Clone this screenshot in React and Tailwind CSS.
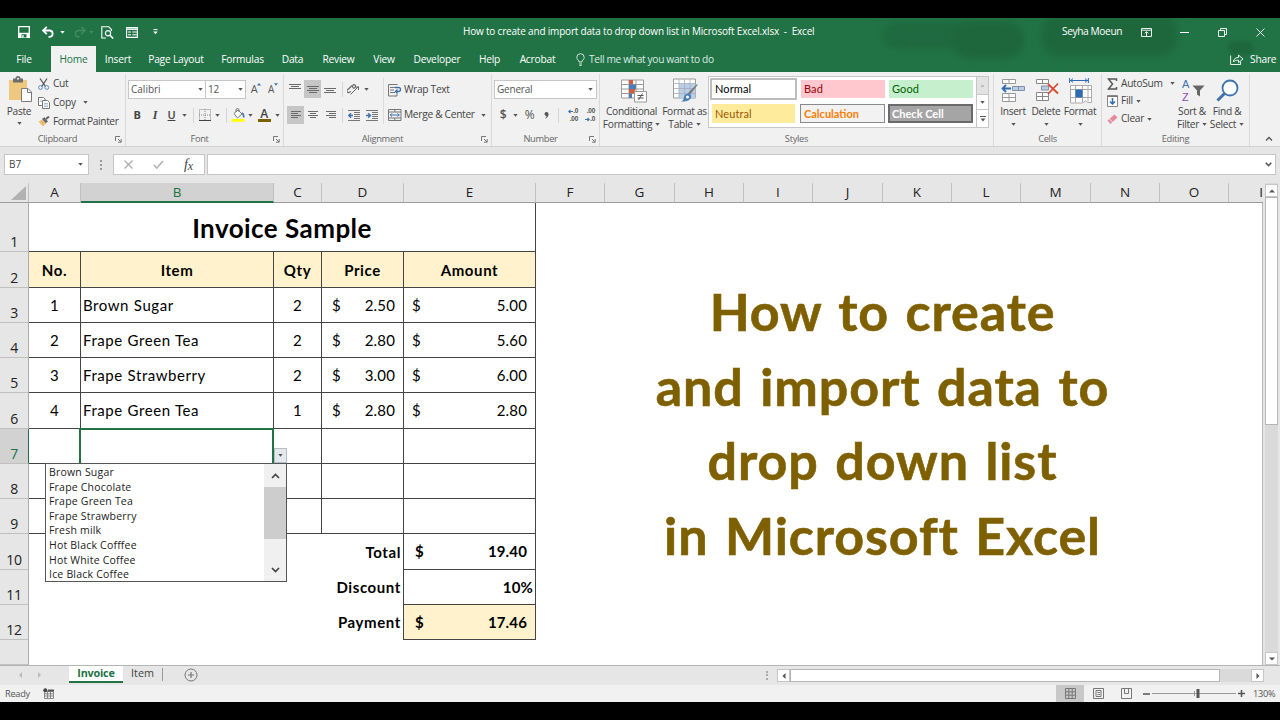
const tabs = [
  { name: "File", w: "w-[48px] mr-[3px]" },
  { name: "Home", w: "w-[45px]", active: true },
  { name: "Insert", w: "w-[44px]" },
  { name: "Page Layout", w: "w-[72px]" },
  { name: "Formulas", w: "w-[61px]" },
  { name: "Data", w: "w-[39px]" },
  { name: "Review", w: "w-[53px]" },
  { name: "View", w: "w-[38px]" },
  { name: "Developer", w: "w-[68px]" },
  { name: "Help", w: "w-[37px]" },
  { name: "Acrobat", w: "w-[59px]" },
];

const columns = [
  { name: "A", w: "w-[52px]" },
  { name: "B", w: "w-[193px]", active: true },
  { name: "C", w: "w-[48px]" },
  { name: "D", w: "w-[82px]" },
  { name: "E", w: "w-[132px]" },
  { name: "F", w: "w-[69px]" },
  { name: "G", w: "w-[70px]" },
  { name: "H", w: "w-[69px]" },
  { name: "I", w: "w-[69px]" },
  { name: "J", w: "w-[70px]" },
  { name: "K", w: "w-[69px]" },
  { name: "L", w: "w-[69px]" },
  { name: "M", w: "w-[70px]" },
  { name: "N", w: "w-[69px]" },
  { name: "O", w: "w-[69px]" },
];

const items = [
  { row: 3, h: "h-[35px]", no: 1, item: "Brown Sugar", qty: 2, price: "2.50", amount: "5.00" },
  { row: 4, h: "h-[35px]", no: 2, item: "Frape Green Tea", qty: 2, price: "2.80", amount: "5.60" },
  { row: 5, h: "h-[35px]", no: 3, item: "Frape Strawberry", qty: 2, price: "3.00", amount: "6.00" },
  { row: 6, h: "h-[36px]", no: 4, item: "Frape Green Tea", qty: 1, price: "2.80", amount: "2.80" },
];

const options = [
  "Brown Sugar",
  "Frape Chocolate",
  "Frape Green Tea",
  "Frape Strawberry",
  "Fresh milk",
  "Hot Black Cofffee",
  "Hot White Coffee",
  "Ice Black Coffee",
];

function Svg({ w, h, className = "", children }) {
  return (
    <svg width={w} height={h} viewBox={`0 0 ${w} ${h}`} fill="none" className={"shrink-0 " + className}>
      {children}
    </svg>
  );
}

function Caret({ className = "text-[#555]" }) {
  return (
    <Svg w={5} h={3} className={className}>
      <path d="M0.3 0h4.4L2.5 2.8z" fill="currentColor" />
    </Svg>
  );
}

function Slot({ w, className = "", children }) {
  return <div className={"flex shrink-0 items-center justify-center " + w + " " + className}>{children}</div>;
}

function Launcher() {
  return (
    <Svg w={7} h={7}>
      <path d="M0.5 5V0.5H5M3 3l3 3M6.2 3v3.2H3" stroke="#777" />
    </Svg>
  );
}

function Lines({ d }) {
  return (
    <Svg w={12} h={10}>
      <path d={d} stroke="#6a6a6a" />
    </Svg>
  );
}

function Group({ label, w, launcher, children }) {
  return (
    <div className={"flex h-[74px] shrink-0 flex-col " + w}>
      <div className="mt-[2px] flex h-[72px] flex-col border-r border-[#d9d9d9]">
        <div className="h-[58px]">{children}</div>
        <div className="flex h-[14px] items-center text-[9.3px] text-[#666]">
          <div className="flex-1 text-center">{label}</div>
          {launcher && (
            <div className="mr-[3px]">
              <Launcher />
            </div>
          )}
        </div>
      </div>
    </div>
  );
}

function TitleBar() {
  return (
    <div className="relative h-[54px] overflow-hidden bg-[#217346] text-white">
      <div className="absolute left-[882px] top-[4px] h-[27px] w-[88px] rounded-full bg-[#1f6a40] blur-[3px]" />
      <div className="absolute left-[952px] top-[3px] h-[38px] w-[72px] rounded-full bg-[#1e673d] blur-[3px]" />
      <div className="absolute left-[1042px] top-[-4px] h-[42px] w-[135px] rounded-[16px] bg-[#1e673d] blur-[4px]" />
      <div className="absolute left-[1228px] top-[23px] h-[14px] w-[26px] rounded-full bg-[#1e673d] blur-[2px]" />

      <div className="relative flex h-[28px] items-center text-[10.3px]">
        <Slot w="ml-[15px] w-[18px]">
          <Svg w={12} h={12}>
            <path d="M0.7 0.7h10.6v10.6H0.7z" stroke="#fff" strokeWidth="1.3" />
            <path d="M1 6.8h10v4.5H1z" fill="#fff" />
            <path d="M3.5 8.2h5v3.3h-5z" fill="#217346" />
            <path d="M4.2 9.2h1.5v2.3H4.2z" fill="#fff" />
          </Svg>
        </Slot>
        <Slot w="w-[30px]">
          <Svg w={13} h={12}>
            <path d="M1 4.5h7a3.2 3.2 0 0 1 0 6.3H6.5M4.8 0.8L1 4.5l3.8 3.7" stroke="#fff" strokeWidth="1.8" />
          </Svg>
        </Slot>
        <Caret className="-ml-[3px] text-white" />
        <Slot w="ml-[5px] w-[18px]">
          <Svg w={13} h={12}>
            <path d="M12 4.5H5a3.2 3.2 0 0 0 0 6.3h1.5M8.2 0.8L12 4.5 8.2 8.2" stroke="#468a65" strokeWidth="1.4" />
          </Svg>
        </Slot>
        <Caret className="ml-[1px] text-[#468a65]" />
        <Slot w="ml-[4px] w-[18px]">
          <Svg w={13} h={13}>
            <path d="M5 12H0.8V0.8h7L10.5 3.5V5" stroke="#fff" strokeWidth="1.1" />
            <circle cx="7" cy="7.2" r="2.6" stroke="#fff" strokeWidth="1.2" />
            <path d="M9 9.3l3.2 3.2" stroke="#fff" strokeWidth="1.5" />
          </Svg>
        </Slot>
        <Slot w="ml-[7px] w-[18px]">
          <Svg w={12} h={11}>
            <path d="M0.6 0.6h10.8v9.8H0.6z" stroke="#fff" strokeWidth="1.1" />
            <path d="M0.6 2.2h10.8" stroke="#fff" strokeWidth="1.4" />
            <path d="M2 5h3M2 7.8h3M6.3 5H11M6.3 7.8H11" stroke="#fff" strokeWidth="1.1" />
          </Svg>
        </Slot>
        <Svg w={5} h={6} className="ml-[12px]">
          <path d="M0.5 0.6h4" stroke="#fff" />
          <path d="M0.3 2.5h4.4L2.5 5.2z" fill="#fff" />
        </Svg>
        <div className="ml-[305px] mt-[-1px] w-[365px] whitespace-pre text-[10px] tracking-[-0.19px]">
          How to create and import data to drop down list in Microsoft Excel.xlsx  -  Excel
        </div>
        <div className="ml-auto w-[76px] whitespace-nowrap text-[10.2px] tracking-[-0.4px]">Seyha Moeun</div>
        <Slot w="w-[16px]">
          <Svg w={11} h={9}>
            <path d="M0.5 0.5h10v8H0.5zM0.5 2.2h10M5.5 8V4M3.7 5.4l1.8-1.8 1.8 1.8" stroke="#fff" strokeWidth="0.9" />
          </Svg>
        </Slot>
        <Slot w="ml-[22px] w-[16px]">
          <Svg w={9} h={1}>
            <path d="M0 0.5h9" stroke="#fff" />
          </Svg>
        </Slot>
        <Slot w="ml-[22px] w-[16px]">
          <Svg w={9} h={9}>
            <path d="M0.5 2.5h6v6h-6zM2.5 2.5v-2h6v6h-2" stroke="#fff" strokeWidth="0.9" />
          </Svg>
        </Slot>
        <Slot w="ml-[22px] mr-[12px] w-[16px]">
          <Svg w={9} h={9}>
            <path d="M0.5 0.5l8 8M8.5 0.5l-8 8" stroke="#fff" strokeWidth="0.9" />
          </Svg>
        </Slot>
      </div>

      <div className="relative flex h-[26px] items-center text-[10.2px] tracking-[-0.2px]">
        {tabs.map((t) => (
          <Slot
            key={t.name}
            w={t.w}
            className={"h-[26px] whitespace-nowrap pt-[1px] " + (t.active ? "bg-[#f1f1f1] text-[#217346]" : "")}
          >
            {t.name}
          </Slot>
        ))}
        <Svg w={9} h={13} className="ml-[9px]">
          <path d="M3 9V7.8C1.6 6.9 0.8 5.8 0.8 4.4a3.7 3.7 0 0 1 7.4 0C8.2 5.8 7.4 6.900 6 7.8V9zM3 11h3M3.5 12.5h2" stroke="#e3efe8" strokeWidth="0.9" />
        </Svg>
        <div className="ml-[4px] mt-[2px] whitespace-nowrap tracking-[-0.34px] text-[#dcebe2]">
          Tell me what you want to do
        </div>
        <Svg w={14} h={12} className="ml-auto">
          <path d="M0.6 2.5v9h10V8.5M3.5 9c0-3 2-4.500 5-4.500V2l4.500 4-4.500 3.700V7.200C6 7.200 4.500 7.500 3.500 9z" stroke="#fff" strokeWidth="0.9" />
        </Svg>
        <div className="ml-[6px] mt-[1px] w-[30px]">Share</div>
      </div>
    </div>
  );
}

function Clipboard() {
  return (
    <Group label="Clipboard" w="w-[126px]" launcher>
      <div className="flex">
        <div className="flex w-[38px] flex-col items-center pt-[2px]">
          <Svg w={26} h={27} className="ml-[4px]">
            <path d="M1 4h18v20H1z" fill="#edc87e" />
            <path d="M5 2.5h2.5a2.5 2.5 0 0 1 5 0H15v4H5z" fill="#6d6d6d" />
            <circle cx="10" cy="2.8" r="1" fill="#f1f1f1" />
            <path d="M13.5 12.500h6.500l3.500 3.500v9.500h-10z" fill="#fff" stroke="#7a7a7a" />
            <path d="M19.500 12.500v4h4" stroke="#7a7a7a" />
          </Svg>
          <div className="mt-[1px] text-[10.2px] leading-[14px]">Paste</div>
          <div className="mt-[4px]">
            <Caret />
          </div>
        </div>
        <div className="flex-1 text-[10.2px]">
          <div className="flex h-[19px] items-center pt-[1px]">
            <Svg w={12} h={12}>
              <path d="M2 0.500l5.500 8M9 0.500L3.800 8.500" stroke="#555" strokeWidth="1.300" />
              <circle cx="2.500" cy="9.500" r="1.900" stroke="#5b8cc0" />
              <circle cx="8.800" cy="9.500" r="1.900" stroke="#5b8cc0" />
            </Svg>
            <span className="ml-[3px]">Cut</span>
          </div>
          <div className="flex h-[19px] items-center">
            <Svg w={12} h={12}>
              <path d="M0.500 0.500h5L7 2v6.500H0.500z" fill="#fff" stroke="#777" />
              <path d="M4.500 3.500h5l2 2v6h-7z" fill="#fff" stroke="#777" />
              <path d="M6 6.500h4M6 8h4M6 9.500h4M1.800 3h2M1.800 4.500h2" stroke="#7fa3cc" strokeWidth="0.700" />
            </Svg>
            <span className="ml-[3px] mr-[7px]">Copy</span>
            <Caret />
          </div>
          <div className="flex h-[18px] items-center pt-[1px]">
            <Svg w={12} h={11}>
              <path d="M0.500 5.500l4-2 3.500 4L5 10.500z" fill="#e9bb72" />
              <path d="M4 2.800l2.500-1.500 3.500 4.200-2.300 1.700z" fill="#666" />
              <path d="M8 3l3-2.500" stroke="#666" strokeWidth="2" />
            </Svg>
            <span className="ml-[3px] whitespace-nowrap tracking-[-0.4px]">Format Painter</span>
          </div>
        </div>
      </div>
    </Group>
  );
}

function FontGroup() {
  return (
    <Group label="Font" w="w-[158px]" launcher>
      <div className="mt-[6px] flex h-[18px] items-center pl-[2px] text-[10px] text-[#555]">
        <div className="flex h-[19px] w-[78px] items-center justify-between border border-[#c6c6c6] bg-white pl-[2px] pr-[2px] tracking-normal">
          Calibri <Caret />
        </div>
        <div className="-ml-px flex h-[19px] w-[41px] items-center justify-between border border-[#c6c6c6] bg-white pl-[2px] pr-[2px]">
          12 <Caret />
        </div>
        <Slot w="w-[18px] ml-[1px]" className="text-[11px]">
          A
          <Svg w={4} h={3} className="-mt-[9px]">
            <path d="M0 2.500L2 0l2 2.500z" fill="#3f73b0" />
          </Svg>
        </Slot>
        <Slot w="w-[16px]" className="text-[10px]">
          A
          <Svg w={4} h={3} className="-mt-[9px]">
            <path d="M0 0.300h4L2 2.800z" fill="#3f73b0" />
          </Svg>
        </Slot>
      </div>
      <div className="mt-[8px] flex h-[18px] items-center pl-[2px] text-[11px] text-[#444]">
        <Slot w="w-[18px]" className="font-bold">B</Slot>
        <Slot w="w-[18px]" className="font-['Liberation_Serif',serif] text-[12px] font-bold italic">I</Slot>
        <Slot w="w-[15px]" className="font-semibold underline">U</Slot>
        <Slot w="w-[11px]"><Caret /></Slot>
        <Slot w="w-[6px]"><div className="h-[15px] w-px bg-[#d5d5d5]" /></Slot>
        <Slot w="w-[17px]">
          <Svg w={12} h={12}>
            <path d="M0.500 0.500h11v11H0.500zM6 0v12M0 6h12" stroke="#888" strokeDasharray="1 1" />
            <path d="M0 11.500h12" stroke="#444" />
          </Svg>
        </Slot>
        <Slot w="w-[9px]"><Caret /></Slot>
        <Slot w="w-[8px]"><div className="h-[15px] w-px bg-[#d5d5d5]" /></Slot>
        <Slot w="w-[16px]">
          <Svg w={14} h={14}>
            <path d="M3 5.500L7 2l4 4-4.500 4z" fill="#fff" stroke="#777" />
            <path d="M5 4V2a1.500 1.500 0 0 1 3 0v2" stroke="#777" />
            <path d="M11 5c1.500 1 2 2.500 1.500 4.500" stroke="#3f73b0" strokeWidth="1.600" />
            <path d="M0.500 11h13v2.800h-13z" fill="#ffff00" />
          </Svg>
        </Slot>
        <Slot w="w-[9px]"><Caret /></Slot>
        <Slot w="w-[18px]">
          <div className="flex h-[14px] w-[13px] items-center justify-center border-b-3 border-[#7f6000] text-[12px] font-semibold">A</div>
        </Slot>
        <Slot w="w-[8px]"><Caret /></Slot>
      </div>
    </Group>
  );
}

function Alignment() {
  return (
    <Group label="Alignment" w="w-[208px]" launcher>
      <div className="flex">
        <div className="mt-[4px] h-[46px] w-[100px] border-r border-[#dcdcdc]">
          <div className="mt-[2px] flex h-[18px] items-center">
            <Slot w="w-[20px]" className="pl-[2px]">
              <Lines d="M0 0.500h12M2 2.500h8M0 4.500h12" />
            </Slot>
            <Slot w="w-[17px]" className="h-[18px] bg-[#c6c6c6]">
              <Lines d="M0 2.500h12M2 4.500h8M0 6.500h12M2 8.500h8" />
            </Slot>
            <Slot w="w-[18px]">
              <Lines d="M0 4.500h12M2 6.500h8M0 8.500h12" />
            </Slot>
            <Slot w="w-[6px]"><div className="h-[15px] w-px bg-[#d5d5d5]" /></Slot>
            <Slot w="w-[17px]">
              <Svg w={13} h={12}>
                <path d="M1 6.500l4-4M3.500 8a1.800 1.800 0 1 1-2-2M6 2c1.800-1 3.500 1 2 2.500S5 5 6 2z" stroke="#666" strokeWidth="1.100" />
                <path d="M3.500 11.500l8-8M8.500 4h3v3" stroke="#666" />
              </Svg>
            </Slot>
            <Slot w="w-[8px]"><Caret /></Slot>
          </div>
          <div className="mt-[8px] flex h-[18px] items-center">
            <Slot w="w-[17px] ml-[3px]" className="h-[18px] bg-[#c6c6c6]">
              <Lines d="M1 1.500h10M1 3.500h7M1 5.500h10M1 7.500h7" />
            </Slot>
            <Slot w="w-[18px]">
              <Lines d="M1 1.500h10M3 3.500h6M1 5.500h10M3 7.500h6" />
            </Slot>
            <Slot w="w-[17px]">
              <Lines d="M1 1.500h10M4 3.500h7M1 5.500h10M4 7.500h7" />
            </Slot>
            <Slot w="w-[6px]"><div className="h-[15px] w-px bg-[#d5d5d5]" /></Slot>
            <Slot w="w-[18px]">
              <Svg w={12} h={11}>
                <path d="M0 0.500h12M6 2.500h6M6 4.500h6M6 6.500h6M6 8.500h6M0 10.500h12" stroke="#777" />
                <path d="M5 5.500H1M3 3.200L0.800 5.500 3 7.800" stroke="#3f73b0" strokeWidth="1.500" />
              </Svg>
            </Slot>
            <Slot w="w-[17px]">
              <Svg w={12} h={11}>
                <path d="M0 0.500h12M6 2.500h6M6 4.500h6M6 6.500h6M6 8.500h6M0 10.500h12" stroke="#777" />
                <path d="M0 5.500h4M2.200 3.200l2.200 2.300-2.200 2.300" stroke="#3f73b0" strokeWidth="1.500" />
              </Svg>
            </Slot>
          </div>
        </div>
        <div className="mt-[6px] flex-1 pl-[4px] text-[10.2px]">
          <div className="flex h-[18px] items-center pt-[2px]">
            <Svg w={14} h={13}>
              <path d="M0.500 0.500h9M0.500 12V0.500M0.500 12h7M9 10v2H7" stroke="#777" />
              <path d="M2 3.500h5M2 6h4M2 8.500h5" stroke="#777" />
              <path d="M7 3.500h3.500a2 2 0 0 1 0 4H8M9.500 5.500l-2 2 2 2" stroke="#3f73b0" strokeWidth="1.300" />
            </Svg>
            <span className="ml-[2px] whitespace-nowrap">Wrap Text</span>
          </div>
          <div className="mt-[8px] flex h-[18px] items-center">
            <Svg w={14} h={12}>
              <path d="M0.500 0.500h12.500v11H0.500zM0.500 3h12.500M0.500 9h12.500M6.800 0v3M6.800 9v3" stroke="#777" />
              <path d="M2 6h9.500M4 4.300L2.300 6 4 7.700M9.500 4.300L11.200 6 9.500 7.700" stroke="#3f73b0" />
            </Svg>
            <span className="ml-[2px] mr-[6px] whitespace-nowrap">Merge &amp; Center</span>
            <Caret />
          </div>
        </div>
      </div>
    </Group>
  );
}

function NumberGroup() {
  return (
    <Group label="Number" w="w-[108px]" launcher>
      <div className="ml-[2px] mt-[6px] flex h-[19px] w-[103px] items-center justify-between border border-[#c6c6c6] bg-white pl-[2px] pr-[3px] text-[10px] tracking-[-0.2px] text-[#555]">
        General <Caret />
      </div>
      <div className="mt-[7px] flex h-[18px] items-center text-[12px] text-[#555]">
        <Slot w="w-[14px] ml-[4px]" className="font-semibold">$</Slot>
        <Slot w="w-[11px]"><Caret /></Slot>
        <Slot w="w-[17px]">%</Slot>
        <Slot w="w-[16px]">
          <Svg w={5} h={7}>
            <path d="M0.500 2a2 2 0 1 1 4 0c0 2-1 3.500-3 4.500L1 6c1-0.600 1.500-1.200 1.500-2.100C1.300 3.900 0.500 3 0.500 2z" fill="#555" />
          </Svg>
        </Slot>
        <Slot w="w-[8px]"><div className="h-[15px] w-px bg-[#d5d5d5]" /></Slot>
        <div className="flex w-[16px] shrink-0 flex-col items-end font-['Liberation_Sans',sans-serif] text-[6.500px] font-bold leading-[8px]">
          <div className="flex items-center">
            <Svg w={5} h={5}>
              <path d="M5 2.500H1M2.500 0.800L0.800 2.500l1.700 1.700" stroke="#3f73b0" strokeWidth="1.200" />
            </Svg>
            .0
          </div>
          <div>.00</div>
        </div>
        <div className="ml-[1px] flex w-[16px] shrink-0 flex-col items-end font-['Liberation_Sans',sans-serif] text-[6.500px] font-bold leading-[8px]">
          <div>.00</div>
          <div className="flex items-center">
            <Svg w={5} h={5}>
              <path d="M0 2.500h4M2.500 0.800l1.700 1.700-1.700 1.700" stroke="#3f73b0" strokeWidth="1.200" />
            </Svg>
            .0
          </div>
        </div>
      </div>
    </Group>
  );
}

function BigButton({ w, icon, line1, line2, caret }) {
  return (
    <div className={"flex shrink-0 flex-col items-center " + w}>
      <div className="flex h-[31px] items-center justify-center pt-[2px]">{icon}</div>
      <div className="whitespace-nowrap text-[10.2px] leading-[13px]">{line1}</div>
      <div className="flex h-[13px] items-center gap-[3px] whitespace-nowrap text-[10.2px] leading-[13px]">
        {line2}
        {caret && <Caret />}
      </div>
    </div>
  );
}

function Styles() {
  return (
    <Group label="Styles" w="w-[394px]">
      <div className="flex">
        <BigButton
          w="w-[63px]"
          line1="Conditional"
          line2="Formatting"
          caret
          icon={
            <Svg w={26} h={24} className="ml-[4px]">
              <path d="M0.500 1h22v18h-22zM0.500 5.500h22M0.500 10h22M0.500 14.500h22M8 1v18M15 1v18" stroke="#9a9a9a" fill="#fff" />
              <path d="M8 1h4v4.500H8zM8 10h6v4.500H8z" fill="#cf5b42" />
              <path d="M8 5.500h7V10H8zM8 14.500h3V19H8z" fill="#4a7ebb" />
              <path d="M13.500 12.500h12v10.500h-12z" fill="#fff" stroke="#999" />
              <path d="M16.500 16.500h6M16.500 19h6M21.500 14.500l-4 6.500" stroke="#555" />
            </Svg>
          }
        />
        <BigButton
          w="w-[43px]"
          line1="Format as"
          line2="Table"
          caret
          icon={
            <Svg w={26} h={25} className="ml-[2px]">
              <path d="M0.500 1h22v19h-22z" fill="#fff" stroke="#9a9a9a" />
              <path d="M6 6h16.500v14H6z" fill="#b9cfe8" />
              <path d="M0.500 5.500h22M0.500 10.500h22M0.500 15.500h22M6 1v19M11.500 1v19M17 1v19" stroke="#a5adb8" strokeWidth="0.800" />
              <path d="M25 6.500L17 16.500l-2-1.500 8.500-8.500z" fill="#777" />
              <path d="M15.500 15.500c2 0.500 3 2 2.500 4-1 3-5 4.500-10 4 2.500-1 2.500-2 3-4.500 0.500-2 2-3.500 4.500-3.500z" fill="#4a7ebb" />
              <circle cx="14.500" cy="19" r="1.500" fill="#fff" />
            </Svg>
          }
        />
        <div className="ml-[2px] mt-[2px] flex h-[52px] w-[281px] border border-[#c6c6c6] bg-white font-['Lato',sans-serif] text-[11px] tracking-[0.1px]">
          <div className="grid w-[267px] grid-cols-[87px_85px_85px] grid-rows-[22px_19px] gap-x-[3px] gap-y-[4px] pl-[1px] pt-[1px]">
            <div className="flex items-center border-2 border-[#bdbdbd] pl-[3px] text-black">Normal</div>
            <div className="my-[2px] ml-px flex items-center bg-[#ffc7ce] pl-[3px] text-[#9c0006]">Bad</div>
            <div className="my-[2px] ml-px flex items-center bg-[#c6efce] pl-[3px] text-[#006100]">Good</div>
            <div className="ml-[2px] mr-[2px] flex items-center bg-[#ffeb9c] pl-[3px] pt-[1px] text-[#9c5700]">Neutral</div>
            <div className="flex items-center border border-[#8a8a8a] bg-[#f2f2f2] pl-[3px] pt-[1px] font-bold tracking-[0px] text-[#fa7d00]">
              Calculation
            </div>
            <div className="flex items-center border-2 border-[#6a6a6a] bg-[#a5a5a5] pl-[2px] pt-[1px] font-bold tracking-[0px] text-white">
              Check Cell
            </div>
          </div>
          <div className="flex flex-1 flex-col border-l border-[#c6c6c6]">
            <Slot w="w-full" className="h-[17px] bg-[#e3e3e3]">
              <Caret className="rotate-180 text-[#bbb]" />
            </Slot>
            <Slot w="w-full" className="h-[16px] border-y border-[#c6c6c6]">
              <Caret />
            </Slot>
            <Slot w="w-full" className="h-[17px]">
              <Svg w={6} h={6}>
                <path d="M0 0.500h6" stroke="#555" />
                <path d="M0.600 2.500h4.800L3 5.400z" fill="#555" />
              </Svg>
            </Slot>
          </div>
        </div>
      </div>
    </Group>
  );
}

function Cells() {
  return (
    <Group label="Cells" w="w-[108px]">
      <div className="flex pl-[3px]">
        <BigButton
          w="w-[32px]"
          line1="Insert"
          caret
          icon={
            <Svg w={24} h={25}>
              <path d="M1.500 1.500h13v4h-13zM8 1.500v4M1.500 15.500h13v8h-13zM1.500 19.500h13M8 15.500v8" stroke="#999" fill="#fff" />
              <path d="M11.500 8.500h12v4h-12zM17.500 8.500v4" fill="#b9cfe8" stroke="#7f8fa5" />
              <path d="M10 10.500H1.500M5 7l-3.500 3.500L5 14" stroke="#2f6cb3" strokeWidth="1.800" />
            </Svg>
          }
        />
        <BigButton
          w="w-[34px]"
          line1="Delete"
          caret
          icon={
            <Svg w={24} h={25} className="ml-[2px]">
              <path d="M1.500 1.500h12v4h-12zM7.500 1.500v4M1.500 14.500h12v8h-12zM1.500 18.500h12M7.500 14.500v8" stroke="#888" fill="#fff" />
              <path d="M6.500 8h7v4h-7z" fill="#b9cfe8" stroke="#7f8fa5" />
              <path d="M13 6l10 9.500M23 5.500L13 16" stroke="#d8492c" strokeWidth="1.800" />
            </Svg>
          }
        />
        <BigButton
          w="w-[34px]"
          line1="Format"
          caret
          icon={
            <Svg w={24} h={26} className="ml-[2px]">
              <path d="M1 2.500h18M4 0.500L1.800 2.500 4 4.500M16 0.500l2.200 2L16 4.500M0.600 0v5M19.400 0v5" stroke="#2f6cb3" />
              <path d="M1.500 7.500h21v17h-4l-2-1.500-3 2h-12zM1.500 11.500h21M1.500 19.500h21M6.500 7.500v17M13.500 7.500v17M19 7.500v16" stroke="#aaa" fill="#fff" />
              <path d="M6.500 11.500h7v8h-7z" fill="#2f6cb3" />
            </Svg>
          }
        />
      </div>
    </Group>
  );
}

function Editing() {
  return (
    <Group label="Editing" w="w-[148px]">
      <div className="flex">
        <div className="w-[73px] pl-[5px] text-[10.2px]">
          <div className="flex h-[18px] items-center pt-[1px]">
            <Svg w={11} h={12}>
              <path d="M9.500 3V1H1.500l4 5-4 5h8V9" stroke="#555" strokeWidth="1.500" />
            </Svg>
            <span className="ml-[3px] mr-[7px]">AutoSum</span>
            <Caret />
          </div>
          <div className="flex h-[18px] items-center">
            <Svg w={11} h={12}>
              <path d="M0.500 0.500h10v11h-10z" fill="#fff" stroke="#888" />
              <path d="M0.500 1.500h10" stroke="#777" />
              <path d="M5.500 3v6M3 6.500L5.500 9 8 6.500" stroke="#2f6cb3" strokeWidth="1.500" />
            </Svg>
            <span className="ml-[3px] mr-[3px]">Fill</span>
            <Caret />
          </div>
          <div className="flex h-[18px] items-center">
            <Svg w={11} h={11}>
              <path d="M0.500 6.500L7.500 0.500l3 3-7 6.500z" fill="#e58a9c" />
              <path d="M2.500 4.800L5.500 8.200" stroke="#fff" strokeWidth="0.800" />
            </Svg>
            <span className="ml-[3px] mr-[3px]">Clear</span>
            <Caret />
          </div>
        </div>
        <BigButton
          w="w-[34px]"
          line1="Sort &amp;"
          line2="Filter"
          caret
          icon={
            <div className="ml-[3px] flex items-center">
              <div className="font-['Liberation_Sans',sans-serif] text-[11px] leading-[13px]">
                <div className="text-[#3f73b0]">A</div>
                <div className="text-[#8e4bb5]">Z</div>
              </div>
              <Svg w={13} h={12} className="ml-[3px]">
                <path d="M0.500 0.500h12L8 5.500v6l-3-2v-4z" fill="#666" />
              </Svg>
            </div>
          }
        />
        <BigButton
          w="w-[36px]"
          line1="Find &amp;"
          line2="Select"
          caret
          icon={
            <Svg w={23} h={23}>
              <circle cx="14" cy="9" r="7.500" fill="#fff" stroke="#3f73b0" strokeWidth="1.800" />
              <path d="M8.500 14.500L1.500 21.500" stroke="#3f73b0" strokeWidth="3" />
            </Svg>
          }
        />
      </div>
    </Group>
  );
}

function FormulaBar() {
  return (
    <div className="flex h-[36px] items-start bg-[#e6e6e6] pt-[7px] text-[10px] text-[#444]">
      <div className="ml-[4px] flex h-[21px] w-[85px] items-center justify-between border border-[#c6c6c6] bg-white pl-[4px] pr-[5px]">
        B7 <Caret />
      </div>
      <Slot w="w-[24px]" className="h-[21px]">
        <div className="h-[10px] border-l-2 border-dotted border-[#999]" />
      </Slot>
      <div className="flex h-[21px] w-[92px] items-center border border-[#c6c6c6] bg-white">
        <Slot w="w-[29px]">
          <Svg w={9} h={9}>
            <path d="M0.500 0.500l8 8M8.500 0.500l-8 8" stroke="#aaa" strokeWidth="1.300" />
          </Svg>
        </Slot>
        <Slot w="w-[31px]">
          <Svg w={11} h={9}>
            <path d="M0.800 5l3 3L10 1" stroke="#b5b5b5" strokeWidth="1.700" />
          </Svg>
        </Slot>
        <Slot w="w-[29px]" className="font-['Liberation_Serif',serif] text-[14px] italic">
          f<span className="mt-[2px] text-[12px]">x</span>
        </Slot>
      </div>
      <div className="ml-[2px] flex h-[21px] w-[1069px] items-center justify-end border border-[#c6c6c6] bg-white pr-[3px]">
        <Svg w={7} h={5}>
          <path d="M0.700 0.800l2.800 2.800L6.300 0.800" stroke="#555" strokeWidth="1.500" />
        </Svg>
      </div>
    </div>
  );
}

function ColumnHeader() {
  return (
    <div className="flex h-[20px] w-[1263px] bg-[#e6e6e6] text-[13.500px] text-[#222]">
      <div className="flex h-[20px] w-[29px] shrink-0 items-start justify-end border-b border-r border-b-[#9b9b9b] border-r-[#c0c0c0] pr-[2px] pt-[3px]">
        <Svg w={15} h={14}>
          <path d="M15 0v14H0z" fill="#b2b2b2" />
        </Svg>
      </div>
      {columns.map((c) => (
        <div
          key={c.name}
          className={
            "flex h-[20px] shrink-0 items-center justify-center border-r border-r-[#c0c0c0] " +
            c.w +
            (c.active ? " border-b-2 border-b-[#217346] bg-[#d2d2d2] text-[#217346]" : " border-b border-b-[#9b9b9b]")
          }
        >
          {c.name}
        </div>
      ))}
      <div className="flex h-[20px] flex-1 items-center justify-end border-b border-b-[#9b9b9b]">I</div>
    </div>
  );
}

function Row({ n, h, active, children }) {
  return (
    <div className={"flex " + h}>
      <div
        className={
          "flex w-[29px] shrink-0 items-end justify-center border-b border-r border-b-[#c0c0c0] font-['Open_Sans',sans-serif] text-[14px] leading-[18px] tracking-[-0.300px] " +
          (active ? "border-r-[#217346] bg-[#d2d2d2] text-[#217346]" : "border-r-[#ababab] bg-[#e6e6e6] text-[#222]")
        }
      >
        {n}
      </div>
      {children}
    </div>
  );
}

function Cell({ w, className = "", children }) {
  return <div className={"flex shrink-0 items-center border-b border-r border-[#444] " + w + " " + className}>{children}</div>;
}

function HeadCell({ w, children }) {
  return (
    <Cell w={w} className="justify-center bg-[#fff2cc] pt-[1px] font-bold tracking-[0.600px]">
      {children}
    </Cell>
  );
}

function Label({ children }) {
  return (
    <div className="flex w-[375px] items-center justify-end border-r border-[#444] pr-[2px] font-bold tracking-[0.600px]">
      {children}
    </div>
  );
}

function Money({ w, className = "", children }) {
  return (
    <Cell w={w} className={"justify-between pr-[8px] " + className}>
      <span>$</span>
      <span>{children}</span>
    </Cell>
  );
}

function Sheet() {
  return (
    <div className="relative w-[536px] font-['Lato',sans-serif] text-[15px] tracking-[0.150px] text-black">
      <Row n={1} h="h-[49px]">
        <Cell w="w-[507px]" className="justify-center pt-[2px] text-[26px] font-bold tracking-[0.450px]">Invoice Sample</Cell>
      </Row>
      <Row n={2} h="h-[36px]">
        <HeadCell w="w-[52px]">No.</HeadCell>
        <HeadCell w="w-[193px]">Item</HeadCell>
        <HeadCell w="w-[48px]">Qty</HeadCell>
        <HeadCell w="w-[82px]">Price</HeadCell>
        <HeadCell w="w-[132px]">Amount</HeadCell>
      </Row>
      {items.map((it) => (
        <Row key={it.row} n={it.row} h={it.h}>
          <Cell w="w-[52px]" className="justify-center">{it.no}</Cell>
          <Cell w="w-[193px]" className="pl-[2px] tracking-[0.550px] [word-spacing:0.500px]">{it.item}</Cell>
          <Cell w="w-[48px]" className="justify-center">{it.qty}</Cell>
          <Money w="w-[82px]" className="pl-[10px]">{it.price}</Money>
          <Money w="w-[132px]" className="pl-[8px]">{it.amount}</Money>
        </Row>
      ))}
      {[7, 8, 9].map((n) => (
        <Row key={n} n={n} h="h-[35px]" active={n === 7}>
          <Cell w="w-[52px]" />
          <Cell w="w-[193px]" />
          <Cell w="w-[48px]" />
          <Cell w="w-[82px]" />
          <Cell w="w-[132px]" />
        </Row>
      ))}
      <Row n={10} h="h-[36px]">
        <Label>Total</Label>
        <Money w="w-[132px]" className="pl-[11px] font-bold">19.40</Money>
      </Row>
      <Row n={11} h="h-[35px]">
        <Label>Discount</Label>
        <Cell w="w-[132px]" className="justify-end pr-[2px] font-bold">10%</Cell>
      </Row>
      <Row n={12} h="h-[35px]">
        <Label>Payment</Label>
        <Money w="w-[132px]" className="bg-[#fff2cc] pl-[11px] font-bold">17.46</Money>
      </Row>
      <Row n="" h="h-[25px]" />

      {/* selected cell */}
      <div className="absolute left-[79px] top-[225px] h-[35px] w-[195px] border-2 border-b-0 border-[#217346]" />
      <div className="absolute left-[274px] top-[245px] flex h-[15px] w-[13px] items-center justify-center border border-[#b5bcc6] bg-[#e4e9f0]">
        <Caret />
      </div>

      {/* drop down list */}
      <div className="absolute left-[45px] top-[260px] flex h-[119px] w-[242px] border border-[#555] bg-white font-['Open_Sans',sans-serif] text-[10.500px] tracking-[0.200px]">
        <div className="flex-1 pl-[3px] pt-[1px]">
          {options.map((o) => (
            <div key={o} className="h-[14.600px] leading-[14.600px] text-[#222]">
              {o}
            </div>
          ))}
        </div>
        <div className="flex w-[22px] flex-col items-center bg-[#f0f0f0]">
          <Slot w="w-full" className="h-[23px]">
            <Svg w={9} h={6}>
              <path d="M1 5l3.500-3.500L8 5" stroke="#444" strokeWidth="1.700" />
            </Svg>
          </Slot>
          <div className="h-[52px] w-full bg-[#cdcdcd]" />
          <div className="flex-1" />
          <Slot w="w-full" className="h-[23px]">
            <Svg w={9} h={6}>
              <path d="M1 1l3.500 3.500L8 1" stroke="#444" strokeWidth="1.700" />
            </Svg>
          </Slot>
        </div>
      </div>
    </div>
  );
}

function SheetTabs() {
  return (
    <div className="flex h-[20px] border-t border-[#b5b5b5] bg-[#e6e6e6] text-[10.800px]">
      <Svg w={3} h={6} className="ml-[19px] mt-[6px]">
        <path d="M3 0v6L0 3z" fill="#bbb" />
      </Svg>
      <Svg w={3} h={6} className="ml-[16px] mt-[6px]">
        <path d="M0 0v6l3-3z" fill="#bbb" />
      </Svg>
      <div className="ml-[28px] flex h-[17px] w-[54px] items-center justify-center border-b-2 border-[#217346] bg-white pb-[1px] font-bold tracking-[-0.200px] text-[#217346]">
        Invoice
      </div>
      <div className="mt-[2px] flex h-[13px] w-[40px] items-center justify-center border-r border-[#999] pb-[2px] text-[#444]">Item</div>
      <Svg w={14} h={14} className="ml-[21px] mt-[2px]">
        <circle cx="7" cy="7" r="6" stroke="#777" />
        <path d="M7 4v6M4 7h6" stroke="#777" strokeWidth="1.200" />
      </Svg>
      <div className="ml-[568px] mt-[5px] h-[9px] border-l-2 border-dotted border-[#aaa]" />
      <div className="ml-[9px] mt-[3px] flex h-[13px] w-[487px] bg-[#dadada]">
        <Slot w="w-[13px]" className="border border-[#c6c6c6] bg-white">
          <Svg w={4} h={6}>
            <path d="M3.500 0v6L0.500 3z" fill="#555" />
          </Svg>
        </Slot>
        <div className="w-[430px] border border-[#b5b5b5] bg-white" />
        <div className="flex-1" />
        <Slot w="w-[13px]" className="border border-[#c6c6c6] bg-white">
          <Svg w={4} h={6}>
            <path d="M0.500 0v6l3-3z" fill="#555" />
          </Svg>
        </Slot>
      </div>
    </div>
  );
}

function StatusBar() {
  return (
    <div className="flex h-[17px] items-center bg-[#f1f1f1] text-[9.200px] tracking-[-0.250px] text-[#555]">
      <div className="w-[43px] pl-[5px]">Ready</div>
      <Svg w={11} h={11}>
        <path d="M1.500 3.500h9v7h-9zM4.500 3.500v7M7.500 3.500v7M1.500 5.800h9M1.500 8h9" stroke="#888" />
        <path d="M5 1.500h6v2H5z" fill="#555" />
        <circle cx="2.300" cy="2.200" r="2" fill="#444" />
      </Svg>
      <Slot w="ml-auto w-[28px]" className="h-[17px] bg-[#c8c8c8]">
        <Svg w={11} h={11}>
          <path d="M0.500 0.500h10v10h-10zM3.800 0v11M7.200 0v11M0 3.800h11M0 7.200h11" stroke="#777" />
        </Svg>
      </Slot>
      <Slot w="w-[28px]">
        <Svg w={11} h={11}>
          <path d="M0.500 0.500h10v10h-10zM3 2.500h5v6H3zM4.500 4.500h2.500M4.500 6.500h2.500" stroke="#777" />
        </Svg>
      </Slot>
      <Slot w="w-[28px]">
        <Svg w={11} h={11}>
          <path d="M0.500 0.500h10v10h-10zM3.500 0v5.500h4V0" stroke="#777" />
        </Svg>
      </Slot>
      <Svg w={7} h={2} className="ml-[3px]">
        <path d="M0 1h7" stroke="#555" strokeWidth="1.500" />
      </Svg>
      <Svg w={84} h={9} className="ml-[2px]">
        <path d="M0 4.500h84M42.500 2v5" stroke="#999" />
        <path d="M44.500 0h3v9h-3z" fill="#555" />
      </Svg>
      <Svg w={7} h={7} className="ml-[2px]">
        <path d="M0 3.500h7M3.500 0v7" stroke="#555" strokeWidth="1.500" />
      </Svg>
      <div className="ml-[8px] w-[27px]">130%</div>
    </div>
  );
}

function App() {
  return (
    <div className="h-[720px] w-[1280px] overflow-hidden bg-black py-[18px] font-['Open_Sans',sans-serif] text-[#444]">
      <TitleBar />
      <div className="flex h-[75px] border-b border-[#d2d2d2] bg-[#f1f1f1] tracking-[-0.300px]">
        <Clipboard />
        <FontGroup />
        <Alignment />
        <NumberGroup />
        <Styles />
        <Cells />
        <Editing />
        <div className="flex flex-1 items-end justify-end pb-[4px] pr-[7px]">
          <Svg w={8} h={6}>
            <path d="M1 4.500l3-3 3 3" stroke="#555" strokeWidth="1.300" />
          </Svg>
        </div>
      </div>
      <FormulaBar />

      <div className="flex h-[482px] bg-[#e6e6e6]">
        <div className="w-[1263px]">
          <ColumnHeader />
          <div className="flex h-[462px] overflow-hidden border-r border-[#b5b5b5] bg-white">
            <Sheet />
            <div className="flex-1 pr-[33px] pt-[71px] text-center font-['Lato',sans-serif] text-[52px] font-bold leading-[74.700px] tracking-[0.900px] text-[#7f6000] [-webkit-text-stroke:0.600px_#7f6000] [word-spacing:3px]">
              <p>How to create</p>
              <p>and import data to</p>
              <p>drop down list</p>
              <p>in Microsoft Excel</p>
            </div>
          </div>
        </div>
        {/* vertical scroll bar */}
        <div className="ml-[2px] flex w-[13px] flex-col bg-[#dadada]">
          <Slot w="w-[13px]" className="mt-[1px] h-[13px] border border-[#c6c6c6] bg-white">
            <Svg w={6} h={4}>
              <path d="M0 3.500h6L3 0.500z" fill="#555" />
            </Svg>
          </Slot>
          <div className="h-[228px] w-[13px] border border-[#b5b5b5] bg-white" />
          <div className="flex-1" />
          <Slot w="w-[13px]" className="h-[13px] border border-[#c6c6c6] bg-white">
            <Svg w={6} h={4}>
              <path d="M0 0.500h6L3 3.500z" fill="#555" />
            </Svg>
          </Slot>
        </div>
      </div>
      <SheetTabs />
      <StatusBar />
    </div>
  );
}

export default App;
